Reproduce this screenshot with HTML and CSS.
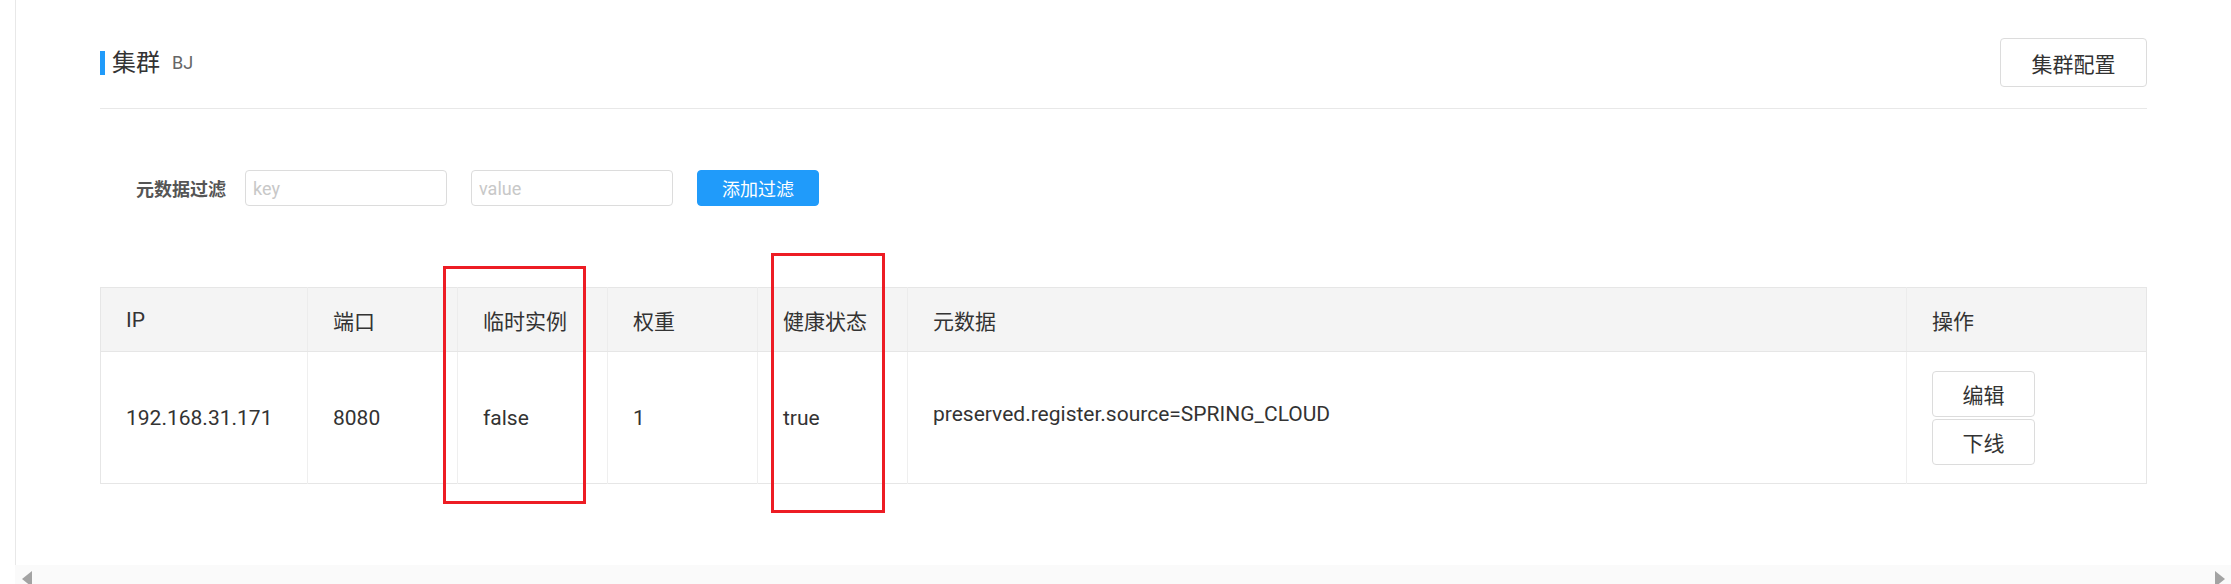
FILE: index.html
```html
<!DOCTYPE html>
<html lang="zh-CN">
<head>
<meta charset="utf-8">
<title>集群</title>
<link rel="stylesheet" href="styles.css">
</head>
<body>
<div class="app">
  <div class="gutter"></div>
  <div class="viewport">
    <div class="content">
      <div class="page-header">
        <div class="title">
          <span class="title-bar"></span>
          <span class="title-text">集群</span>
          <span class="title-sub">BJ</span>
        </div>
        <button class="btn btn-normal btn-config">集群配置</button>
      </div>

      <div class="filter-row">
        <label class="filter-label">元数据过滤</label>
        <input class="filter-input" type="text" placeholder="key">
        <input class="filter-input" type="text" placeholder="value">
        <button class="btn btn-primary btn-filter">添加过滤</button>
      </div>

      <table class="grid">
        <colgroup>
          <col class="c-ip"><col class="c-port"><col class="c-eph"><col class="c-weight"><col class="c-health"><col class="c-meta"><col class="c-op">
        </colgroup>
        <thead>
          <tr>
            <th>IP</th><th>端口</th><th>临时实例</th><th>权重</th><th>健康状态</th><th>元数据</th><th>操作</th>
          </tr>
        </thead>
        <tbody>
          <tr>
            <td>192.168.31.171</td>
            <td>8080</td>
            <td>false</td>
            <td>1</td>
            <td>true</td>
            <td><div class="meta">preserved.register.source=SPRING_CLOUD</div></td>
            <td>
              <div class="ops">
                <button class="btn btn-normal btn-op">编辑</button>
                <button class="btn btn-normal btn-op">下线</button>
              </div>
            </td>
          </tr>
        </tbody>
      </table>
    </div>
    <div class="hscroll">
      <span class="arrow arrow-left"></span>
      <span class="arrow arrow-right"></span>
    </div>
  </div>
</div>
<div class="mark mark-1"></div>
<div class="mark mark-2"></div>
</body>
</html>
```

FILE: styles.css
```css
html, body {
  margin: 0;
  padding: 0;
  background: #fff;
}
body {
  width: 2231px;
  height: 584px;
  overflow: hidden;
  position: relative;
  font-family: Roboto, "Noto Sans CJK SC", sans-serif;
  color: #333;
}
.app {
  display: flex;
  height: 584px;
}
.gutter {
  width: 15px;
  flex: none;
}
.viewport {
  flex: 1;
  display: flex;
  flex-direction: column;
  min-width: 0;
}
.content {
  flex: 1;
  border-left: 1px solid #e8e8e8;
  padding: 0 84px 0 84px;
  min-height: 0;
}
.page-header {
  display: flex;
  align-items: center;
  justify-content: space-between;
  padding: 38px 0 21px;
  border-bottom: 1px solid #e8e8e8;
}
.title {
  display: flex;
  align-items: center;
}
.title-bar {
  width: 5px;
  height: 24px;
  background: #209bfa;
  margin-right: 7px;
}
.title-text {
  font-size: 24px;
  line-height: 24px;
  color: #333;
}
.title-sub {
  font-size: 18px;
  color: #666;
  margin-left: 12px;
  line-height: 24px;
}
.btn {
  font-family: Roboto, "Noto Sans CJK SC", sans-serif;
  border-radius: 4px;
  cursor: pointer;
  padding: 0;
  box-sizing: border-box;
}
.btn-normal {
  background: #fff;
  border: 1px solid #dcdcdc;
  color: #333;
}
.btn-config {
  width: 147px;
  height: 49px;
  font-size: 21px;
}
.filter-row {
  display: flex;
  align-items: center;
  margin-top: 61px;
  height: 36px;
}
.filter-label {
  font-size: 18px;
  font-weight: bold;
  color: #555;
  margin-left: 36px;
  margin-right: 19px;
}
.filter-input {
  width: 202px;
  height: 36px;
  box-sizing: border-box;
  border: 1px solid #dcdcdc;
  border-radius: 4px;
  padding: 0 7px;
  font-size: 18px;
  font-family: Roboto, "Noto Sans CJK SC", sans-serif;
  color: #333;
  margin-right: 24px;
  outline: none;
}
.filter-input::placeholder {
  color: #c8c8c8;
}
.btn-primary {
  background: #209bfa;
  border: 1px solid #209bfa;
  color: #fff;
}
.btn-filter {
  width: 122px;
  height: 36px;
  font-size: 18px;
}
.grid {
  margin-top: 81px;
  width: 2047px;
  border-collapse: collapse;
  table-layout: fixed;
  border: 1px solid #e6e6e6;
  font-size: 21px;
}
.c-ip { width: 207px; }
.c-port, .c-eph, .c-weight, .c-health { width: 150px; }
.c-op { width: 240px; }
.grid th {
  background: #f4f4f4;
  font-weight: normal;
  text-align: left;
  height: 63px;
  padding: 0 25px;
  border-bottom: 1px solid #e6e6e6;
  border-left: 1px solid #ececec;
  color: #333;
}
.grid td {
  height: 131px;
  padding: 0 24px 0 25px;
  border-left: 1px solid #efefef;
  vertical-align: middle;
  color: #333;
}
.grid th:first-child, .grid td:first-child {
  border-left: none;
}
.meta {
  margin-bottom: 8px;
}
.ops {
  display: flex;
  flex-direction: column;
  gap: 2px;
  align-items: flex-start;
}
.btn-op {
  width: 103px;
  height: 46px;
  font-size: 21px;
}
.hscroll {
  height: 19px;
  flex: none;
  background: #fafafa;
  position: relative;
  overflow: hidden;
}
.arrow {
  position: absolute;
  top: 6px;
  width: 0;
  height: 0;
  border-top: 8px solid transparent;
  border-bottom: 8px solid transparent;
}
.arrow-left {
  left: 7px;
  border-right: 10px solid #a3a3a3;
}
.arrow-right {
  right: 6px;
  border-left: 10px solid #a3a3a3;
}
.mark {
  position: absolute;
  border: 3px solid #ed1c24;
  box-sizing: border-box;
}
.mark-1 {
  left: 443px;
  top: 266px;
  width: 143px;
  height: 238px;
}
.mark-2 {
  left: 771px;
  top: 253px;
  width: 114px;
  height: 260px;
}
```
